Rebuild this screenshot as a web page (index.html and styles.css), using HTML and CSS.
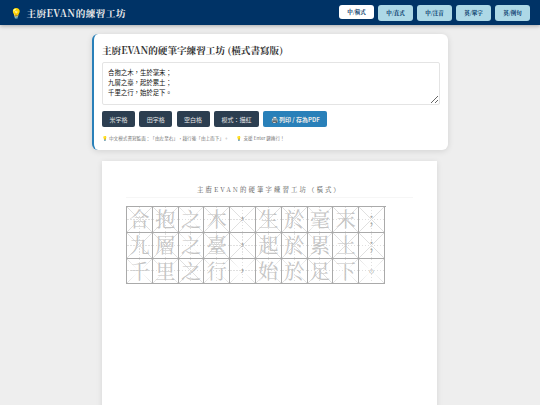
FILE: index.html
```html
<!DOCTYPE html>
<html lang="zh-TW">
<head>
    <meta charset="UTF-8">
    <meta name="viewport" content="width=device-width, initial-scale=1.0">
    <title>主廚EVAN的練習工坊</title>
    <link rel="stylesheet" href="styles.css">
</head>
<body>
    <div class="header">
        <div class="brand"><span class="bulb">💡</span> 主廚EVAN的練習工坊</div>
        <div class="tabs">
            <button class="tab active">中/橫式</button>
            <button class="tab">中/直式</button>
            <button class="tab">中/注音</button>
            <button class="tab">英/單字</button>
            <button class="tab">英/例句</button>
        </div>
    </div>
    <div class="main-container">
        <div class="panel">
            <h2>主廚EVAN的硬筆字練習工坊 (橫式書寫版)</h2>
            <textarea class="input-text">合抱之木，生於毫末；
九層之臺，起於累土；
千里之行，始於足下。</textarea>
            <div class="buttons">
                <button class="btn">米字格</button>
                <button class="btn">田字格</button>
                <button class="btn">空白格</button>
                <button class="btn mode">模式：描紅</button>
                <button class="btn print">🖨️ 列印 / 存為PDF</button>
            </div>
            <div class="hint">
                <span>💡 中文模式書寫監面：「由左至右」，藉行後「由上而下」。</span>
                <span>💡 支援 Enter 鍵換行！</span>
            </div>
        </div>
        <div class="paper">
            <div class="paper-title">主廚EVAN的硬筆字練習工坊（橫式）</div>
            <div class="grid">
                <div class="cell">合</div><div class="cell">抱</div><div class="cell">之</div><div class="cell">木</div><div class="cell punct">，</div>
                <div class="cell">生</div><div class="cell">於</div><div class="cell">毫</div><div class="cell">末</div><div class="cell punct">；</div>
                <div class="cell">九</div><div class="cell">層</div><div class="cell">之</div><div class="cell">臺</div><div class="cell punct">，</div>
                <div class="cell">起</div><div class="cell">於</div><div class="cell">累</div><div class="cell">土</div><div class="cell punct">；</div>
                <div class="cell">千</div><div class="cell">里</div><div class="cell">之</div><div class="cell">行</div><div class="cell punct">，</div>
                <div class="cell">始</div><div class="cell">於</div><div class="cell">足</div><div class="cell">下</div><div class="cell punct">。</div>
            </div>
        </div>
    </div>
</body>
</html>
```

FILE: styles.css
```css
body {
    font-family: "Noto Sans CJK TC", "Liberation Sans", sans-serif;
    background-color: #eeeeee;
    margin: 0;
    height: 405px;
    overflow: hidden;
}
button {
    font-family: inherit;
    border: none;
}
.header {
    display: flex;
    align-items: center;
    justify-content: space-between;
    background-color: #003366;
    height: 25px;
    padding: 0 10px;
    box-shadow: 0 1px 4px rgba(0, 0, 0, 0.3);
}
.brand {
    color: #ececec;
    font-family: "Noto Serif CJK TC", "Liberation Serif", "Noto Sans CJK TC", serif;
    font-size: 9.6px;
    font-weight: bold;
    letter-spacing: 0.5px;
}
.bulb {
    font-size: 10px;
    margin-right: 1px;
}
.tabs {
    display: flex;
    gap: 4px;
}
.tab {
    background-color: #add8e6;
    color: #003366;
    width: 35px;
    height: 16px;
    padding: 0;
    border-radius: 3px;
    font-family: "Noto Serif CJK TC", "Liberation Serif", serif;
    font-size: 5.5px;
    font-weight: bold;
}
.tab.active {
    background-color: #fff;
    height: 14px;
}
.main-container {
    display: flex;
    flex-direction: column;
    align-items: center;
    padding-top: 9px;
}
.panel {
    background-color: #fff;
    border-left: 2px solid #2980b9;
    border-radius: 6px;
    box-shadow: 0 1px 6px rgba(0, 0, 0, 0.12);
    box-sizing: border-box;
    width: 356px;
    height: 116px;
    padding: 9px 8px 0 8px;
}
.panel h2 {
    margin: 0;
    color: #333;
    font-family: "Noto Serif CJK TC", "Liberation Serif", "Noto Sans CJK TC", serif;
    font-size: 9.6px;
    line-height: 14px;
    font-weight: bold;
}
.input-text {
    display: block;
    box-sizing: border-box;
    width: 338px;
    height: 43px;
    margin: 5px 0 6px 0;
    padding: 5px 5px;
    border: 1px solid #e4e4e4;
    border-radius: 2px;
    outline: none;
    font-family: inherit;
    font-size: 6.4px;
    line-height: 10px;
    color: #111;
}
.buttons {
    display: flex;
    gap: 4.3px;
}
.btn {
    background-color: #2c3e50;
    color: #e8e8e8;
    height: 16px;
    width: 33px;
    padding: 0;
    border-radius: 2px;
    font-size: 6px;
}
.btn.mode {
    width: 45px;
}
.btn.print {
    background-color: #2980b9;
    width: 64px;
    font-weight: bold;
}
.hint {
    display: flex;
    gap: 8px;
    margin-top: 6px;
    color: #777;
    font-size: 4.6px;
    line-height: 10px;
}
.paper {
    background-color: #fff;
    box-shadow: 0 1px 6px rgba(0, 0, 0, 0.1);
    box-sizing: border-box;
    width: 335px;
    height: 300px;
    margin-top: 11px;
    margin-right: 1px;
    padding: 23px 24px 0 24px;
}
.paper-title {
    color: #555;
    font-family: "Noto Serif CJK TC", "Liberation Serif", "Noto Sans CJK TC", serif;
    font-size: 6.4px;
    line-height: 11px;
    letter-spacing: 2.1px;
    text-align: center;
    padding-bottom: 2px;
    border-bottom: 1px solid #f6f6f6;
    margin-bottom: 8px;
}
.grid {
    display: grid;
    grid-template-columns: repeat(10, 25.8px);
    grid-auto-rows: 25.8px;
    width: 259px;
    border-top: 1px solid #aaa;
    border-left: 1px solid #aaa;
}
.cell {
    box-sizing: border-box;
    border-right: 1px solid #aaa;
    border-bottom: 1px solid #aaa;
    display: flex;
    align-items: center;
    justify-content: center;
    color: #c4c4c4;
    font-family: "Noto Serif CJK TC", "Noto Sans CJK TC", serif;
    font-size: 20px;
    line-height: 20px;
    background-image:
        linear-gradient(to top right, transparent calc(50% - 0.3px), #e0e0e0 50%, transparent calc(50% + 0.3px)),
        linear-gradient(to bottom right, transparent calc(50% - 0.3px), #e0e0e0 50%, transparent calc(50% + 0.3px)),
        repeating-linear-gradient(to right, #e0e0e0 0 1.5px, transparent 1.5px 3px),
        repeating-linear-gradient(to bottom, #e0e0e0 0 1.5px, transparent 1.5px 3px);
    background-size: 100% 100%, 100% 100%, 100% 1px, 1px 100%;
    background-position: 0 0, 0 0, 0 50%, 50% 0;
    background-repeat: no-repeat;
}
.cell.punct {
    color: #aaa;
    font-size: 15px;
}
```
